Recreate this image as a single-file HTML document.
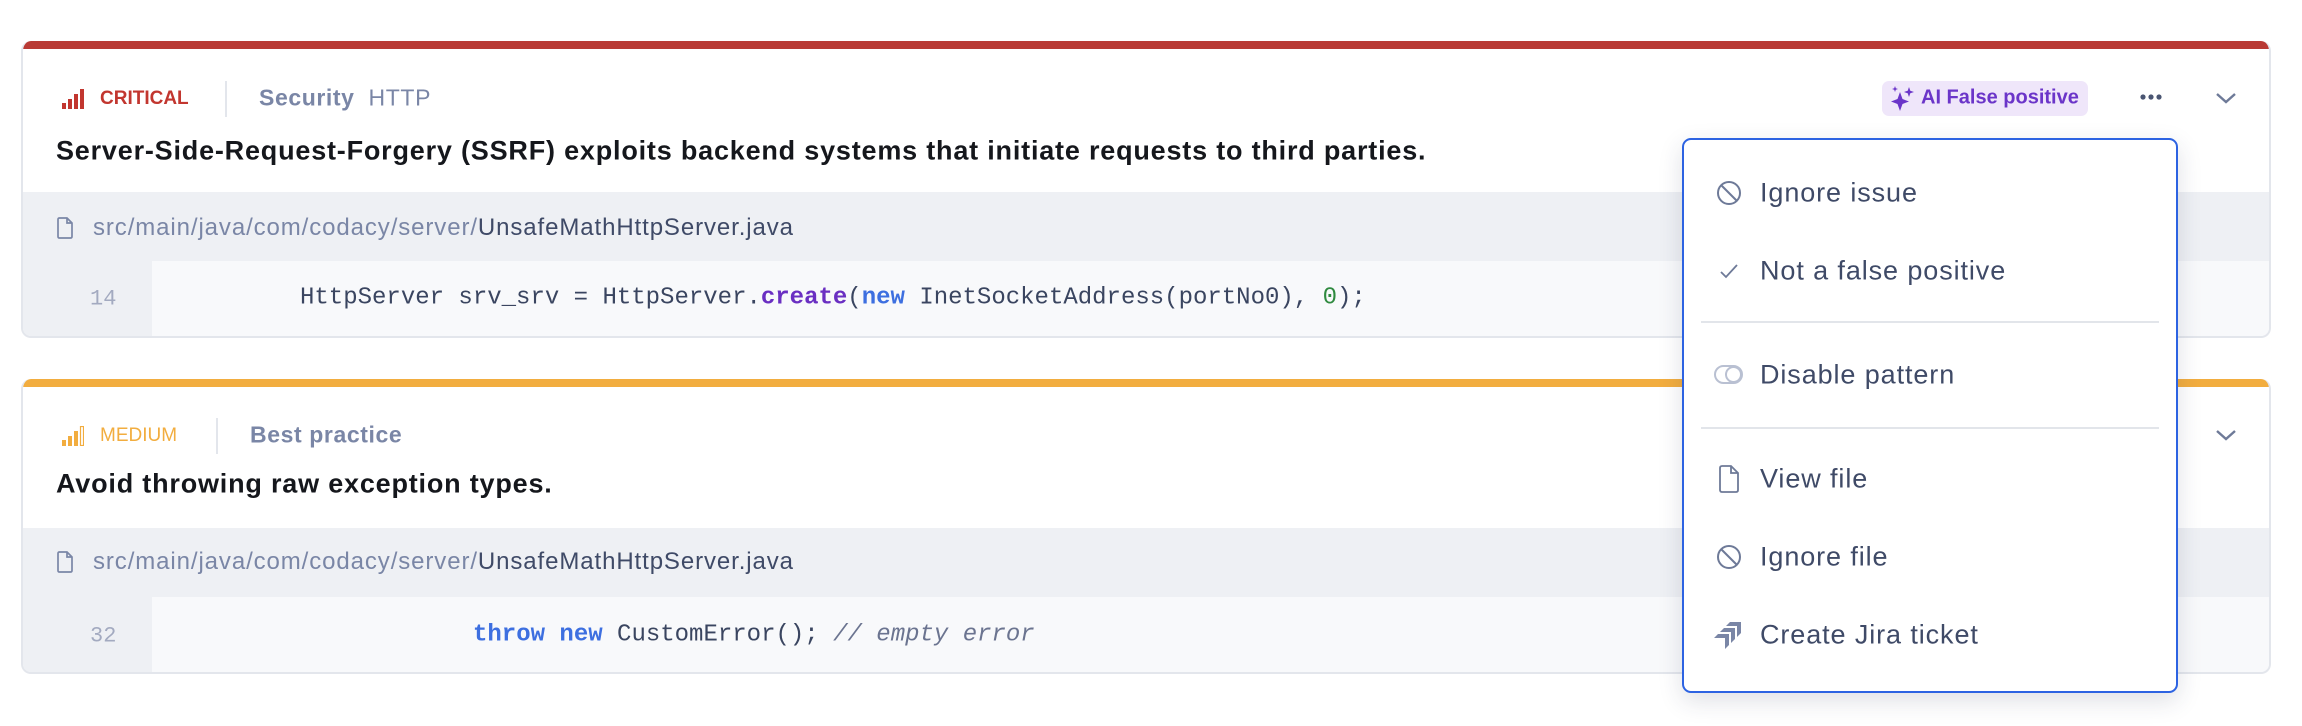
<!DOCTYPE html>
<html><head><meta charset="utf-8"><style>
*{margin:0;padding:0;box-sizing:border-box}
body{width:2302px;height:726px;background:#fff;position:relative;overflow:hidden;font-family:"Liberation Sans",sans-serif}
.a{position:absolute;white-space:nowrap}
.card{position:absolute;left:21px;width:2250px;border:2px solid #e3e6ec;border-top:none;border-radius:10px;background:#fff;overflow:hidden}
.bar{position:absolute;left:0;right:0;top:0;height:8px}
.sev{font-size:19px;font-weight:bold;transform:translateY(-50%)}
.cat{font-size:23px;letter-spacing:0.6px;color:#7a86a6;transform:translateY(-50%)}
.title{font-size:27px;letter-spacing:0.8px;font-weight:bold;color:#15171c;transform:translateY(-50%)}
.file{position:absolute;left:0;right:0;background:#eef0f4}
.code{position:absolute;left:129px;right:0;background:#f8f9fb}
.path{font-size:24px;letter-spacing:0.9px;color:#7a86a6;transform:translateY(-50%)}
.path b{font-weight:normal;color:#3f4a67}
.ln{font-family:"Liberation Mono",monospace;font-size:22px;color:#a3aac0;transform:translateY(-50%)}
.src{font-family:"Liberation Mono",monospace;font-size:24px;color:#3a4560;transform:translateY(-50%)}
.kw{color:#3d6fe0;font-weight:bold}
.fn{color:#6a2fc2;font-weight:bold}
.num{color:#2f8a3f}
.cm{color:#6b7490;font-style:italic}
.dd{position:absolute;left:1682px;top:138px;width:496px;height:555px;border:2.5px solid #2d63e2;border-radius:9px;background:#fff;box-shadow:0 8px 24px rgba(40,50,80,.15)}
.it{position:absolute;left:76px;font-size:27px;letter-spacing:0.9px;color:#3f4a67;transform:translateY(-50%);white-space:nowrap}
.ic{position:absolute;left:32px;transform:translateY(-50%)}
.sep{position:absolute;left:17px;right:17px;height:2px;background:#e2e5ea}
</style></head><body>

<!-- Card 1 -->
<div class="card" style="top:41px;height:297px">
  <div class="bar" style="background:#b93a35"></div>
  <svg class="a" style="left:39px;top:48px" width="22" height="20" viewBox="0 0 22 20"><rect x="0" y="14" width="4" height="6" fill="#c2362f"/><rect x="6" y="10" width="4" height="10" fill="#c2362f"/><rect x="12" y="5" width="4" height="15" fill="#c2362f"/><rect x="18" y="0" width="4" height="20" fill="#c2362f"/></svg>
  <div class="a sev" style="left:77px;top:58px;color:#c2362f">CRITICAL</div>
  <div class="a" style="left:202px;top:40px;width:2px;height:36px;background:#e3e6ec"></div>
  <div class="a cat" style="left:236px;top:57px"><b>Security</b>&nbsp; HTTP</div>
  <div class="a" style="left:1859px;top:40px;width:206px;height:35px;border-radius:7px;background:#efe6fa"></div>
  <svg class="a" style="left:1868px;top:45px" width="24" height="26" viewBox="0 0 24 26"><path d="M9 6 L11.5 13 L18 15.5 L11.5 18 L9 25 L6.5 18 L0 15.5 L6.5 13Z" fill="#6b35c9"/><path d="M18 1 L19.3 4.7 L23 6 L19.3 7.3 L18 11 L16.7 7.3 L13 6 L16.7 4.7Z" fill="#6b35c9"/><path d="M4 0 L4.8 2.2 L7 3 L4.8 3.8 L4 6 L3.2 3.8 L1 3 L3.2 2.2Z" fill="#6b35c9"/></svg>
  <div class="a" style="left:1898px;top:57px;transform:translateY(-50%);font-size:20px;font-weight:bold;color:#6b35c9">AI False positive</div>
  <svg class="a" style="left:2116px;top:52px" width="24" height="8"><circle cx="4" cy="4" r="2.6" fill="#4a5572"/><circle cx="12" cy="4" r="2.6" fill="#4a5572"/><circle cx="20" cy="4" r="2.6" fill="#4a5572"/></svg>
  <svg class="a" style="left:2192px;top:50px" width="22" height="14"><path d="M2 3 L11 11 L20 3" stroke="#6e7a98" stroke-width="2.4" fill="none"/></svg>
  <div class="a title" style="left:33px;top:110px">Server-Side-Request-Forgery (SSRF) exploits backend systems that initiate requests to third parties.</div>
  <div class="file" style="top:151px;height:146px"></div>
  <svg class="a" style="left:34px;top:176px" width="16" height="22" viewBox="0 0 16 22"><path d="M2 1 H10 L15 6 V19.5 Q15 21 13.5 21 H2.5 Q1 21 1 19.5 V2.5 Q1 1 2.5 1Z M10 1 V6 H15" stroke="#7a86a6" stroke-width="1.7" fill="none"/></svg>
  <div class="a path" style="left:70px;top:187px">src/main/java/com/codacy/server/<b>UnsafeMathHttpServer.java</b></div>
  <div class="code" style="top:220px;height:77px"></div>
  <div class="a ln" style="left:67px;top:258px">14</div>
  <div class="a src" style="left:277px;top:257px">HttpServer srv_srv = HttpServer.<span class="fn">create</span>(<span class="kw">new</span> InetSocketAddress(portNo0), <span class="num">0</span>);</div>
</div>

<!-- Card 2 -->
<div class="card" style="top:379px;height:295px">
  <div class="bar" style="background:#f2ad3f"></div>
  <svg class="a" style="left:39px;top:47px" width="22" height="20" viewBox="0 0 22 20"><rect x="0" y="14" width="4" height="6" fill="#f2ad3f"/><rect x="6" y="10" width="4" height="10" fill="#f2ad3f"/><rect x="12" y="5" width="4" height="15" fill="#f2ad3f"/><rect x="18.5" y="0.5" width="3" height="19" fill="none" stroke="#f2ad3f" stroke-width="1.2"/></svg>
  <div class="a sev" style="left:77px;top:57px;color:#f2ad3f;font-weight:normal">MEDIUM</div>
  <div class="a" style="left:193px;top:39px;width:2px;height:36px;background:#e3e6ec"></div>
  <div class="a cat" style="left:227px;top:56px"><b>Best practice</b></div>
  <svg class="a" style="left:2192px;top:49px" width="22" height="14"><path d="M2 3 L11 11 L20 3" stroke="#6e7a98" stroke-width="2.4" fill="none"/></svg>
  <div class="a title" style="left:33px;top:105px">Avoid throwing raw exception types.</div>
  <div class="file" style="top:149px;height:146px"></div>
  <svg class="a" style="left:34px;top:172px" width="16" height="22" viewBox="0 0 16 22"><path d="M2 1 H10 L15 6 V19.5 Q15 21 13.5 21 H2.5 Q1 21 1 19.5 V2.5 Q1 1 2.5 1Z M10 1 V6 H15" stroke="#7a86a6" stroke-width="1.7" fill="none"/></svg>
  <div class="a path" style="left:70px;top:183px">src/main/java/com/codacy/server/<b>UnsafeMathHttpServer.java</b></div>
  <div class="code" style="top:218px;height:77px"></div>
  <div class="a ln" style="left:67px;top:257px">32</div>
  <div class="a src" style="left:450px;top:256px"><span class="kw">throw</span> <span class="kw">new</span> CustomError(); <span class="cm">// empty error</span></div>
</div>

<!-- Dropdown -->
<div class="dd">
  <svg class="ic" style="top:53px" width="26" height="26" viewBox="0 0 26 26"><circle cx="13" cy="13" r="11" stroke="#6e7a98" stroke-width="2" fill="none"/><path d="M5.5 5.5 L20.5 20.5" stroke="#6e7a98" stroke-width="2"/></svg>
  <div class="it" style="top:53px">Ignore issue</div>
  <svg class="ic" style="top:131px" width="26" height="26" viewBox="0 0 26 26"><path d="M5 14 L10 19 L21 7" stroke="#6e7a98" stroke-width="1.8" fill="none"/></svg>
  <div class="it" style="top:131px">Not a false positive</div>
  <div class="sep" style="top:181px"></div>
  <svg class="ic" style="top:235px;left:30px" width="30" height="22" viewBox="0 0 30 22"><rect x="1" y="2" width="27" height="17" rx="8.5" stroke="#b9c0d2" stroke-width="2" fill="none"/><circle cx="19.5" cy="10.5" r="7.5" stroke="#b9c0d2" stroke-width="2" fill="#fff"/></svg>
  <div class="it" style="top:235px">Disable pattern</div>
  <div class="sep" style="top:287px"></div>
  <svg class="ic" style="top:339px;left:35px" width="20" height="28" viewBox="0 0 20 28"><path d="M3 1 H12 L19 8 V25 Q19 27 17 27 H3 Q1 27 1 25 V3 Q1 1 3 1Z M12 1 V8 H19" stroke="#6e7a98" stroke-width="1.8" fill="none"/></svg>
  <div class="it" style="top:339px">View file</div>
  <svg class="ic" style="top:417px" width="26" height="26" viewBox="0 0 26 26"><circle cx="13" cy="13" r="11" stroke="#6e7a98" stroke-width="2" fill="none"/><path d="M5.5 5.5 L20.5 20.5" stroke="#6e7a98" stroke-width="2"/></svg>
  <div class="it" style="top:417px">Ignore file</div>
  <svg class="ic" style="top:495px;left:30px" width="28" height="28" viewBox="0 0 28 28"><path d="M16 1 H27 V12 L23 16 V5 H12Z" fill="#7a86a6"/><path d="M10 7 H21 V18 L17 22 V11 H6Z" fill="#7a86a6"/><path d="M4 13 H15 V24 L11 28 V17 H0Z" fill="#7a86a6"/></svg>
  <div class="it" style="top:495px">Create Jira ticket</div>
</div>
</body></html>
